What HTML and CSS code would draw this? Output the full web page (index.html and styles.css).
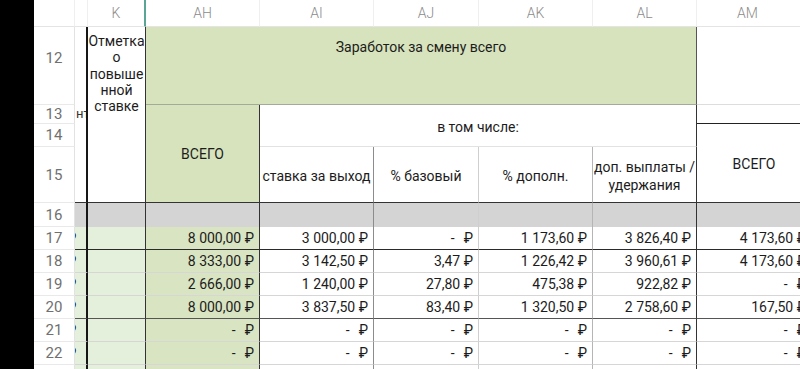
FILE: index.html
```html
<!DOCTYPE html>
<html lang="ru">
<head>
<meta charset="utf-8">
<title>Заработок за смену</title>
<link rel="stylesheet" href="styles.css">
</head>
<body>
<div class="sheet">
  <div class="edge"></div>

  <div class="row">
    <div class="ch"></div>
    <div class="ch"></div>
    <div class="ch sel">K</div>
    <div class="ch">AH</div>
    <div class="ch">AI</div>
    <div class="ch">AJ</div>
    <div class="ch">AK</div>
    <div class="ch">AL</div>
    <div class="ch">AM</div>
  </div>

  <div class="row">
    <div class="rh rh12">12</div>
    <div class="c j"></div>
    <div class="c kmerge">Отметка<br>о<br>повыше<br>нной<br>ставке</div>
    <div class="c title">Заработок за смену всего</div>
    <div class="c am12"></div>
  </div>

  <div class="row">
    <div class="rh">13</div>
    <div class="c j"><span class="tail">нт</span></div>
    <div class="c ahmerge">ВСЕГО</div>
    <div class="c incl">в том числе:</div>
    <div class="c am13"></div>
  </div>

  <div class="row">
    <div class="rh">14</div>
    <div class="c j"></div>
    <div class="c ammerge">ВСЕГО</div>
  </div>

  <div class="row r15">
    <div class="rh">15</div>
    <div class="c j"></div>
    <div class="c sub ai">ставка за выход</div>
    <div class="c sub aj">% базовый</div>
    <div class="c sub ak">% дополн.</div>
    <div class="c sub al two">доп. выплаты /<br>удержания</div>
  </div>

  <div class="row r16">
    <div class="rh">16</div>
    <div class="c j"></div>
    <div class="c k"></div>
    <div class="c ah"></div>
    <div class="c ai"></div>
    <div class="c aj"></div>
    <div class="c ak"></div>
    <div class="c al"></div>
    <div class="c am"></div>
  </div>

  <div class="row data bd">
    <div class="rh">17</div>
    <div class="c j lg"><span class="frag">₽</span></div>
    <div class="c k lg"></div>
    <div class="c ah gr v">8 000,00 ₽</div>
    <div class="c ai v">3 000,00 ₽</div>
    <div class="c aj v"><span class="dash">-</span>₽</div>
    <div class="c ak v">1 173,60 ₽</div>
    <div class="c al v">3 826,40 ₽</div>
    <div class="c am v">4 173,60 ₽</div>
  </div>

  <div class="row data bl">
    <div class="rh">18</div>
    <div class="c j lg"><span class="frag">₽</span></div>
    <div class="c k lg"></div>
    <div class="c ah gr v">8 333,00 ₽</div>
    <div class="c ai v">3 142,50 ₽</div>
    <div class="c aj v">3,47 ₽</div>
    <div class="c ak v">1 226,42 ₽</div>
    <div class="c al v">3 960,61 ₽</div>
    <div class="c am v">4 173,60 ₽</div>
  </div>

  <div class="row data bl">
    <div class="rh">19</div>
    <div class="c j lg"><span class="frag">₽</span></div>
    <div class="c k lg"></div>
    <div class="c ah gr v">2 666,00 ₽</div>
    <div class="c ai v">1 240,00 ₽</div>
    <div class="c aj v">27,80 ₽</div>
    <div class="c ak v">475,38 ₽</div>
    <div class="c al v">922,82 ₽</div>
    <div class="c am v"><span class="dash">-</span>₽</div>
  </div>

  <div class="row data bm">
    <div class="rh">20</div>
    <div class="c j lg"><span class="frag">₽</span></div>
    <div class="c k lg"></div>
    <div class="c ah gr v">8 000,00 ₽</div>
    <div class="c ai v">3 837,50 ₽</div>
    <div class="c aj v">83,40 ₽</div>
    <div class="c ak v">1 320,50 ₽</div>
    <div class="c al v">2 758,60 ₽</div>
    <div class="c am v">167,50 ₽</div>
  </div>

  <div class="row data bl">
    <div class="rh">21</div>
    <div class="c j lg"><span class="frag">₽</span></div>
    <div class="c k lg"></div>
    <div class="c ah gr v"><span class="dash">-</span>₽</div>
    <div class="c ai v"><span class="dash">-</span>₽</div>
    <div class="c aj v"><span class="dash">-</span>₽</div>
    <div class="c ak v"><span class="dash">-</span>₽</div>
    <div class="c al v"><span class="dash">-</span>₽</div>
    <div class="c am v"><span class="dash">-</span>₽</div>
  </div>

  <div class="row data bl">
    <div class="rh">22</div>
    <div class="c j lg"><span class="frag">₽</span></div>
    <div class="c k lg"></div>
    <div class="c ah gr v"><span class="dash">-</span>₽</div>
    <div class="c ai v"><span class="dash">-</span>₽</div>
    <div class="c aj v"><span class="dash">-</span>₽</div>
    <div class="c ak v"><span class="dash">-</span>₽</div>
    <div class="c al v"><span class="dash">-</span>₽</div>
    <div class="c am v"><span class="dash">-</span>₽</div>
  </div>

  <div class="row data bl">
    <div class="rh">23</div>
    <div class="c j lg"></div>
    <div class="c k lg"></div>
    <div class="c ah gr"></div>
    <div class="c ai"></div>
    <div class="c aj"></div>
    <div class="c ak"></div>
    <div class="c al"></div>
    <div class="c am"></div>
  </div>
</div>
</body>
</html>
```

FILE: styles.css
```css
html, body {
  margin: 0;
  padding: 0;
  background: #ffffff;
}

body {
  width: 800px;
  height: 369px;
  overflow: hidden;
  font-family: Roboto, "Noto Sans", "DejaVu Sans", sans-serif;
  font-size: 14px;
  color: #1c1c1c;
}

.sheet {
  display: grid;
  grid-template-columns: 34px 41px 13px 58px 114px 114px 105px 114px 104px 114px;
  grid-template-rows: 27px 78px 19px 23px 56px 24px repeat(6, 23px) 23px;
  width: 811px;
}

.row {
  display: contents;
}

.edge {
  grid-row: span 13;
  background: #000000;
}

.ch,
.rh,
.c {
  box-sizing: border-box;
  overflow: hidden;
  white-space: nowrap;
}

/* column letters */
.ch {
  display: flex;
  align-items: center;
  justify-content: center;
  color: #8c8c8c;
  font-weight: 300;
  font-size: 14px;
  border-bottom: 1px solid #e4e4e4;
  border-right: 1px solid #efefef;
}

.ch:last-child {
  padding-right: 12px;
}

.ch.sel {
  border-right: 2px solid #5aa596;
}

/* row numbers */
.rh {
  display: flex;
  align-items: center;
  justify-content: center;
  color: #707070;
  font-size: 15px;
  border-bottom: 1px solid #e9e9e9;
  border-right: 1px solid #e2e2e2;
}

.rh12 {
  padding-bottom: 16px;
}

.c {
  display: flex;
  align-items: center;
}

/* column borders */
.j {
  border-right: 2px solid #161616;
}

.k,
.ah,
.al {
  border-right: 1px solid #333333;
}

.ai {
  border-right: 1px solid #8c8c8c;
}

.aj {
  border-right: 1px solid #cfcfcf;
}

.ak {
  border-right: 1px solid #b5b5b5;
}

/* header blocks */
.kmerge {
  grid-row: span 4;
  display: block;
  text-align: center;
  padding-top: 6px;
  line-height: 16.3px;
  border-right: 1px solid #333333;
  border-bottom: 1px solid #333333;
  overflow: visible;
}

.title {
  grid-column: span 5;
  display: block;
  text-align: center;
  padding-top: 12px;
  line-height: 17px;
  background: #d7e3bd;
  border-bottom: 1px solid #a2aa9a;
  border-right: 1px solid #555555;
}

.am12 {
  border-bottom: 1px solid #dddddd;
}

.tail {
  font-size: 13px;
  color: #333333;
  padding-left: 1px;
  margin-top: -2px;
}

.ahmerge {
  grid-row: span 3;
  justify-content: center;
  background: #d7e3bd;
  border-right: 1px solid #333333;
  border-bottom: 1px solid #333333;
}

.incl {
  grid-column: span 4;
  grid-row: span 2;
  justify-content: center;
  padding-top: 2px;
  border-bottom: 1px solid #e2e2e2;
  border-right: 1px solid #333333;
}

.am13 {
  border-bottom: 1px solid #222222;
}

.ammerge {
  grid-row: span 2;
  justify-content: center;
  padding-top: 1px;
  border-bottom: 1px solid #333333;
}

.r15 > .c {
  border-bottom: 1px solid #333333;
}

.sub {
  justify-content: center;
  padding-top: 2px;
}

.two {
  text-align: center;
  line-height: 18px;
  white-space: normal;
}

/* grey band */
.r16 > .c {
  background: #d4d4d4;
}

/* data rows */
.lg {
  background: #e4efdc;
}

.gr {
  background: #d9e4c2;
}

.v {
  justify-content: flex-end;
  padding-right: 5px;
}

.dash {
  margin-right: 9px;
}

.frag {
  margin-left: -8px;
}

.bd > .c {
  border-bottom: 1px solid #2a2a2a;
}

.bm > .c {
  border-bottom: 1px solid #555555;
}

.bl > .c {
  border-bottom: 1px solid #d6d6d6;
}
```
